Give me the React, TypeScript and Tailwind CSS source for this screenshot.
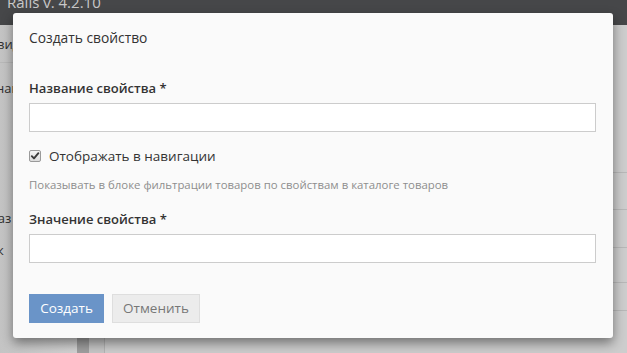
import React from "react";

const font = { fontFamily: "'Open Sans', 'Noto Sans', sans-serif" };

function Checkbox() {
  return (
    <span className="inline-flex h-[12px] w-[12px] items-center justify-center rounded-[2px] border border-[#9a9a9a] bg-gradient-to-b from-[#f4f4f4] to-[#dcdcdc]">
      <svg width="10" height="10" viewBox="0 0 10 10">
        <path d="M1.8 5.2 L4 7.4 L8.4 2.2" fill="none" stroke="#3a3a3a" strokeWidth="1.9" strokeLinecap="round" strokeLinejoin="round" />
      </svg>
    </span>
  );
}

export default function App() {
  return (
    <div className="relative h-[353px] w-[627px] overflow-hidden bg-[#cbcbcb]" style={font}>
      {/* background page (dimmed) */}
      <div className="flex h-[25px] items-start bg-[#464749] pl-[7px]">
        <span className="mt-[-8px] text-[15px] leading-[20px] text-[#c9c9c9]">Rails v. 4.2.10</span>
      </div>
      <div className="flex h-[328px]">
        <div className="flex w-[77px] flex-col bg-gradient-to-r from-[#c4c4c4] to-[#d2d2d2] text-[13px] leading-[20px] text-[#2f2f2f]">
          <div className="mt-[9px] ml-[-3px] h-[28px]">вид</div>
          <div className="h-px bg-[#b9b9b9]" />
          <div className="mt-[15px] ml-[-4px]">нав</div>
          <div className="mt-[110px] ml-[-9px]">каз</div>
          <div className="mt-[12px] ml-[-3px]">к</div>
        </div>
        <div className="w-[12px] bg-[#9f9f9f]" />
        <div className="w-[16px] border-r border-[#b3b3b3] bg-[#c6c6c6]" />
        <div className="flex flex-1 flex-col bg-[#cdcdcd]">
          <div className="h-[147px]" />
          <div className="h-[37px] border-t border-[#b8b8b8]" />
          <div className="h-[38px] border-t border-[#b8b8b8]" />
          <div className="h-[35px] border-t border-[#b8b8b8]" />
          <div className="h-[28px] border-t border-[#b8b8b8]" />
          <div className="border-t border-[#b8b8b8] pl-[27px] pt-[6px] text-[15px] leading-[20px] text-[#2a2a2a]">
            Отображать в навигации
          </div>
        </div>
      </div>

      {/* modal */}
      <div className="absolute left-[13px] top-[13px] flex h-[325px] w-[600px] flex-col rounded-[3px] bg-[#fafafa] px-4 pt-[15px] shadow-[0_5px_12px_rgba(0,0,0,0.45)]">
        <div className="text-[13.8px] leading-[20px] text-[#333]">Создать свойство</div>
        <div className="mt-[30px] text-[13px] font-semibold leading-[20px] text-[#333]">Название свойства *</div>
        <div className="mt-[5px] h-[29px] w-[567px] border border-[#cccccc] bg-white" />
        <div className="mt-[14px] flex h-[20px] items-center">
          <Checkbox />
          <span className="ml-[8px] text-[13.5px] leading-[20px] text-[#333]">Отображать в навигации</span>
        </div>
        <div className="mt-[11px] text-[11.4px] leading-[16px] text-[#8e8e8e]">
          Показывать в блоке фильтрации товаров по свойствам в каталоге товаров
        </div>
        <div className="mt-[16px] text-[13px] font-semibold leading-[20px] text-[#333]">Значение свойства *</div>
        <div className="mt-[5px] h-[29px] w-[567px] border border-[#cccccc] bg-white" />
        <div className="mt-[31px] flex gap-[8px]">
          <button className="h-[29px] w-[75px] bg-[#6a94c8] text-[13.5px] text-white">Создать</button>
          <button className="h-[29px] w-[88px] border border-[#dedede] bg-[#ececec] text-[13.5px] text-[#777]">Отменить</button>
        </div>
      </div>
    </div>
  );
}
